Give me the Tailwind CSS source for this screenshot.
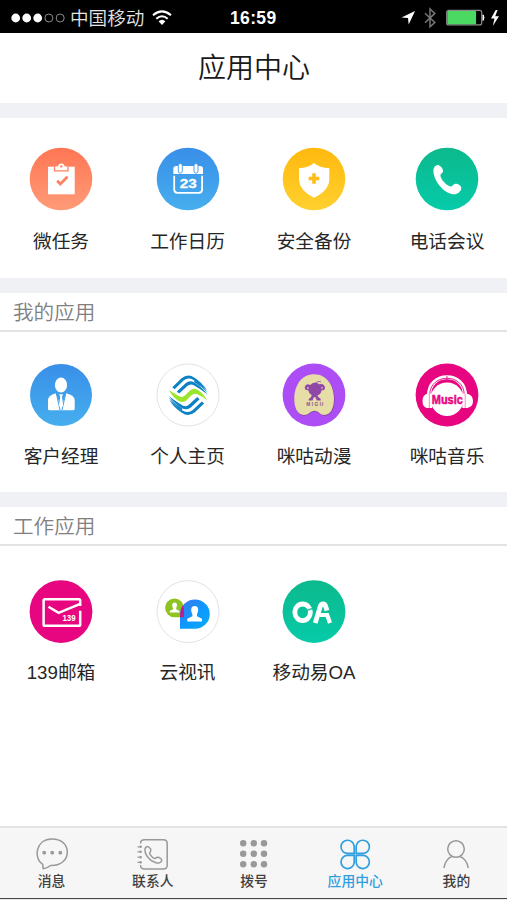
<!DOCTYPE html>
<html lang="zh-CN">
<head>
<meta charset="utf-8">
<title>应用中心</title>
<script src="https://cdn.jsdelivr.net/npm/@tailwindcss/browser@4"></script>
</head>
<body class="w-[507px] h-[900px] overflow-hidden bg-white font-['Liberation_Sans','Noto_Sans_CJK_SC',sans-serif] text-[#262626]">
<svg class="absolute w-0 h-0" aria-hidden="true">
  <defs>
    <linearGradient id="orange" x2="0" y2="1"><stop stop-color="#ff7654"/><stop offset="1" stop-color="#ff9b78"/></linearGradient>
    <linearGradient id="blue" x2="0" y2="1"><stop stop-color="#398fe8"/><stop offset="1" stop-color="#46aeee"/></linearGradient>
    <linearGradient id="yellow" x2="0" y2="1"><stop stop-color="#ffb90f"/><stop offset="1" stop-color="#ffd02e"/></linearGradient>
    <linearGradient id="green" x2="0" y2="1"><stop stop-color="#0cb98c"/><stop offset="1" stop-color="#06cba9"/></linearGradient>
    <linearGradient id="bubble" x2="1" y2="1"><stop stop-color="#3f74ee"/><stop offset=".55" stop-color="#0b9bff"/><stop offset="1" stop-color="#12a8f5"/></linearGradient>
    <g id="waves" fill="#0c82c6">
      <path d="M16.3 24.2 25.5 15.3Q32 10.2 38.5 14.8Q46 19.5 51.2 27.6Q44 20.5 37.5 16.9Q32 13.7 27.3 17.8L18.6 26.2Z"/>
      <path d="M20.8 28.4 29.3 20.4Q33.5 16.8 38.3 19.4Q46 23.8 51.7 31.6Q44 25.5 37.8 22.2Q34.3 20.3 31.3 23L23.2 30.6Z"/>
      <path d="M38.5 17.3Q46.5 21.7 51.5 29.6Q45 23 38 19Z"/>
    </g>
  </defs>
</svg>
<div class="flex flex-col w-[507px] h-[900px]">
  <header class="h-[33px] shrink-0 bg-black text-white flex items-center justify-between pl-[11px] pr-[6px] relative">
    <div class="flex items-center h-[33px] pt-[2px]">
      <svg class="w-[54px] h-[12px]" viewBox="0 0 54 12"><g fill="#fff"><circle cx="4.7" cy="6" r="4.4"/><circle cx="15.7" cy="6" r="4.4"/><circle cx="26.7" cy="6" r="4.4"/></g><g fill="none" stroke="#8b8b8b"><circle cx="37.9" cy="6" r="4"/><circle cx="49.2" cy="6" r="4"/></g></svg>
      <span class="ml-[5px] mt-[2px] text-[18.6px] leading-[24px] text-[#e4e4e4] font-[350] whitespace-nowrap">中国移动</span>
      <svg class="ml-[8px] w-[20px] h-[16px]" viewBox="0 0 20 16" fill="none" stroke="#fff" stroke-width="2.1"><path d="M1 5.2Q10-2.6 19 5.2M4.3 8.7Q10 3.8 15.7 8.7"/><path d="M6.6 11.2Q10 8.1 13.4 11.2L10 14.9Z" fill="#fff" stroke="none"/></svg>
    </div>
    <span class="absolute left-[230px] top-[8px] text-[17.5px] leading-[21px] font-bold whitespace-nowrap tracking-[0.35px]">16:59</span>
    <svg class="w-[101px] h-[24px] mt-[2px]" viewBox="0 0 101 24">
      <path d="M15 5 1.5 11.5 8 12 8.7 18.5Z" fill="#fff"/>
      <path d="M25 7.2 34.8 16.5 30 20.8V3L34.8 7.4 25 16.7" fill="none" stroke="#777" stroke-width="1.5"/>
      <rect x="46.7" y="4.3" width="35" height="14.6" rx="2" fill="none" stroke="#8b8b8b" stroke-width="1.2"/>
      <rect x="47.3" y="4.9" width="28.8" height="13.4" rx="1" fill="#4bd964"/>
      <path d="M83 8.8Q85 11.6 83 14.5Z" fill="#fff" stroke="#fff"/>
      <path d="M95.7 4 91 12.5H94.5L92.8 20 99 10.2H95.2L97.6 4Z" fill="#fff"/>
    </svg>
  </header>
  <h1 class="h-[70px] shrink-0 text-center text-[28px] font-[350] leading-[72px] text-[#191919] pl-px">应用中心</h1>

  <section class="h-[175px] shrink-0 border-t-[15px] border-[#eff1f4] pt-[28.5px] pl-[19px] grid grid-cols-[126.5px_126.5px_133px_84px] content-start text-[18.7px] leading-[28px] text-center whitespace-nowrap">
    <div class="w-[84px] flex flex-col items-center"><svg class="w-[64px] h-[64px]" viewBox="0 0 64 64"><circle cx="32" cy="32" r="31.3" fill="url(#orange)"/><path d="M19 19.7H45.7V47.3H19Z" fill="#fff"/><path d="M25.5 19.7V23.8H39V19.7" fill="none" stroke="#ff8061" stroke-width="1.3"/><path d="M27 22.5V19.5H29Q29.4 16.6 32.3 16.6T35.6 19.5H37.5V22.5Z" fill="#fff"/><circle cx="32.3" cy="19.4" r="1.2" fill="#ff8061"/><path d="M28.2 33.8 31.3 37 38.5 29.8" fill="none" stroke="#ff8160" stroke-width="2.8"/></svg><span class="mt-[17px]">微任务</span></div>
    <div class="w-[84px] flex flex-col items-center"><svg class="w-[64px] h-[64px]" viewBox="0 0 64 64"><circle cx="32" cy="32" r="31.3" fill="url(#blue)"/><path d="M17.3 27V22Q17.3 19 20.3 19H44Q47 19 47 22V27Z" fill="#fff"/><path d="M18.2 28.7V42.6Q18.2 45.9 21.5 45.9H42.8Q46.1 45.9 46.1 42.6V28.7" fill="none" stroke="#fff" stroke-width="1.8"/><g fill="#fff" stroke="#4095e5" stroke-width=".9"><rect x="22.3" y="16.5" width="4" height="9.7" rx="2"/><rect x="38" y="16.5" width="4" height="9.7" rx="2"/></g><text x="32.2" y="40.6" text-anchor="middle" textLength="17" lengthAdjust="spacingAndGlyphs" font-family="Liberation Sans" font-weight="700" font-size="13.5" fill="#fff" stroke="#fff" stroke-width=".3">23</text></svg><span class="mt-[17px]">工作日历</span></div>
    <div class="w-[84px] flex flex-col items-center"><svg class="w-[64px] h-[64px]" viewBox="0 0 64 64"><circle cx="32" cy="32" r="31.3" fill="url(#yellow)"/><path d="M32 16Q37.5 21 47.3 21.3V33Q46.5 44 32 50.7Q17.8 44 17 33V21.3Q26.5 21 32 16Z" fill="#fff"/><path d="M32 26.2V36.8M26.7 31.5H37.3" stroke="#ffbd19" stroke-width="3.6"/></svg><span class="mt-[17px]">安全备份</span></div>
    <div class="w-[84px] flex flex-col items-center"><svg class="w-[64px] h-[64px]" viewBox="0 0 64 64"><circle cx="32" cy="32" r="31.3" fill="url(#green)"/><path d="M18.5 22Q19.3 18.8 22.3 18.1C25 17.6 28.5 22 28.1 24.4C27.8 26 25.7 26.2 25.4 28.2C25.5 32.3 31.5 38.6 35.8 39.5C37.4 39.5 37.9 37.4 39.8 36.9C42.3 36.4 46.6 38.7 46.3 41.2C46 44.6 42.5 47.4 38.4 47.2C28.5 46.5 17.3 32.5 18.5 22Z" fill="#fff"/></svg><span class="mt-[17px]">电话会议</span></div>
  </section>

  <section class="h-[214px] shrink-0 border-t-[15px] border-[#eff1f4]">
    <h2 class="h-[39px] border-b-2 border-[#e2e3e5] pl-[13px] text-[20.6px] leading-[40px] font-[350] text-[#808080]">我的应用</h2>
    <div class="pt-[31px] pl-[19px] grid grid-cols-[126.5px_126.5px_133px_84px] text-[18.7px] leading-[28px] text-center whitespace-nowrap">
      <div class="w-[84px] flex flex-col items-center"><svg class="w-[64px] h-[64px]" viewBox="0 0 64 64"><circle cx="32" cy="32" r="31" fill="url(#blue)"/><ellipse cx="32" cy="22" rx="6.1" ry="7.4" fill="#fff"/><path d="M27 30.2 32 45 37.2 30.2Q45.7 32.5 45.7 37V45.7Q45.7 47.2 44.2 47.2H20.5Q19 47.2 19 45.7V37Q19 32.5 27 30.2Z" fill="#fff"/><path d="M27.3 30.2 31 47M36.8 30.2 33 47" stroke="#429ee8" stroke-width="1"/><path d="M30.2 31.3H34L33 34 34.2 42.5 32 45.5 30 42.5 31.2 34Z" fill="#fff"/></svg><span class="mt-[16px]">客户经理</span></div>
      <div class="w-[84px] flex flex-col items-center"><svg class="w-[64px] h-[64px]" viewBox="0 0 64 64"><circle cx="32" cy="32" r="31" fill="#fff" stroke="#e3e3e3"/><use href="#waves"/><use href="#waves" transform="rotate(180 32.2 32.3)"/><path d="M13 27.2Q18.5 30.5 23.3 33.2Q26.5 35 29.2 32.3L34.2 27.3Q37.8 24.2 42 27Q47.5 30.6 51.2 37.2Q46.2 33.2 41.2 31.2Q38 29.8 35.2 32.4L30.2 37.4Q26.5 40.5 22.3 37.8Q16.7 34 13 27.2Z" fill="#9ce52d"/></svg><span class="mt-[16px]">个人主页</span></div>
      <div class="w-[84px] flex flex-col items-center"><svg class="w-[64px] h-[64px]" viewBox="0 0 64 64"><circle cx="32" cy="32" r="31.4" fill="#ac4df6"/><path d="M32.5 12C45 12 52.7 23 52.7 36C52.7 46 49 52.5 43 52.7C37.5 52.7 37 48.5 32.8 48.5S27.5 53 22 52.7C15.5 52.2 12.5 45 12.7 36C13 22 20.5 12 32.5 12Z" fill="#85449f"/><path d="M32.3 11.3C44.5 11.3 52 22.5 52 35.5C52 45.5 48.5 51.7 42.5 52C37.8 52 36.8 47.7 32.5 47.7S26.8 52.2 21.8 52C15.3 51.5 12.1 44.5 12.3 35.5C12.6 21.5 20 11.3 32.3 11.3Z" fill="#e7dda7"/><g fill="#9048a8"><path d="M28.2 22Q32.5 17.3 37.3 21.3Q42 19.7 43 24.5Q43.2 27.5 39.5 27.5Q39 31.5 35.3 32.4L37 34.7Q39 35 38.8 37.4H34.8L33.6 34.3H31.8L30.5 37.4H26.5Q26.6 35 28.6 34.7L29.8 32.3Q26.6 30.5 26.3 27.3Q22.4 27.5 22.8 24Q24 20 28.2 22Z"/></g><path d="M33.5 20.5Q35.5 17.5 39 18.8" fill="none" stroke="#9048a8" stroke-width=".8"/><circle cx="25.8" cy="25" r=".9" fill="#d9c0b1"/><circle cx="40" cy="24.8" r=".9" fill="#d9c0b1"/><text x="32.7" y="42.6" text-anchor="middle" textLength="17" font-family="Liberation Sans" font-weight="700" font-size="4.8" fill="#88568b">MIGU</text></svg><span class="mt-[16px]">咪咕动漫</span></div>
      <div class="w-[84px] flex flex-col items-center"><svg class="w-[64px] h-[64px]" viewBox="0 0 64 64"><circle cx="32" cy="32" r="31.4" fill="#e80580"/><circle cx="32" cy="36.2" r="16.7" fill="#fff"/><path d="M14.2 33C12.8 8 51.2 8 49.8 33" fill="none" stroke="#fff" stroke-width="4.2"/><path d="M14.8 31C15.5 10 48.5 10 49.2 31" fill="none" stroke="#e80580" stroke-width=".9"/><path d="M32 13V18" stroke="#e80580" stroke-width=".8"/><path d="M12 30.8H17V45H12Q7.5 44 7.5 38T12 30.8ZM47.3 30.8H52.3Q58 32.2 58 38T52.3 45H47.3Z" fill="#fff"/><path d="M14.3 31V45M50.2 31V45" stroke="#f58ac3" stroke-width="1"/><text x="32.3" y="40.8" text-anchor="middle" textLength="31" lengthAdjust="spacingAndGlyphs" font-family="Liberation Sans" font-weight="700" font-size="12.5" fill="#e80580" stroke="#e80580" stroke-width=".5">Music</text></svg><span class="mt-[16px]">咪咕音乐</span></div>
    </div>
  </section>

  <section class="flex-1 border-t-[15px] border-[#eff1f4]">
    <h2 class="h-[39px] border-b-2 border-[#e2e3e5] pl-[13px] text-[20.6px] leading-[39px] font-[350] text-[#808080]">工作应用</h2>
    <div class="pt-[33.5px] pl-[19px] grid grid-cols-[126.5px_126.5px_133px_84px] text-[18.7px] leading-[28px] text-center whitespace-nowrap">
      <div class="w-[84px] flex flex-col items-center"><svg class="w-[64px] h-[64px]" viewBox="0 0 64 64"><circle cx="32" cy="31.6" r="31.4" fill="#e80580"/><path d="M51.2 26V20.5Q51.2 19.2 49.8 19.2H16Q14.6 19.2 14.6 20.5V44.4Q14.6 45.8 16 45.8H49.8Q51.2 45.8 51.2 44.4V30.7" fill="none" stroke="#fff" stroke-width="2.5"/><path d="M19.5 26.7 29.6 32.8 51.2 23.8" fill="none" stroke="#fff" stroke-width="2.5"/><text x="40" y="41" text-anchor="middle" textLength="13.2" lengthAdjust="spacingAndGlyphs" font-family="Liberation Sans" font-weight="700" font-size="8.5" fill="#fff">139</text></svg><span class="mt-[15px]">139邮箱</span></div>
      <div class="w-[84px] flex flex-col items-center"><svg class="w-[64px] h-[64px]" viewBox="0 0 64 64"><circle cx="32" cy="31.6" r="31" fill="#fff" stroke="#e3e3e3"/><path d="M18.5 18.4A9.4 9.4 0 1 0 18.5 37.2H27.9V27.8A9.4 9.4 0 0 0 18.5 18.4Z" fill="#8fc31f"/><path d="M24 48.8V34.1A14.9 14.7 0 1 1 38.8 48.8Z" fill="url(#bubble)"/><path d="M24.2 34Q24.4 29 26.8 25.5Q28 27.5 27.9 31V37.2H24.2Z" fill="#c51a86"/><path d="M18.6 22.5C21.2 22.5 21.6 25.5 20.2 28V29.3L23.5 31V32.4H13.8V31L17 29.3V28C15.7 25.5 16 22.5 18.6 22.5ZM38.7 26C42.7 26 43 30.5 41 34.2V36.2L46 38.7V41.5H31.3V38.7L36.4 36.2V34.2C34.4 30.5 34.7 26 38.7 26Z" fill="#fff"/></svg><span class="mt-[15px]">云视讯</span></div>
      <div class="w-[84px] flex flex-col items-center"><svg class="w-[64px] h-[64px]" viewBox="0 0 64 64"><circle cx="32" cy="31.6" r="31.4" fill="url(#green)"/><ellipse cx="20.6" cy="32.3" rx="7.8" ry="8.3" fill="none" stroke="#fff" stroke-width="4.8"/><path d="M24.2 30.6 31.5 28.2" stroke="#0ac09a" stroke-width="1.3"/><path d="M33.2 43 38 27.5Q38.8 24 41 24T44 27.5L45 31" fill="none" stroke="#fff" stroke-width="4.8"/><path d="M37.5 35H45.2L48 43" fill="none" stroke="#fff" stroke-width="4.2"/><path d="M41 31.8 48 30.6" stroke="#0ac09a" stroke-width="1"/></svg><span class="mt-[15px]">移动易OA</span></div>
    </div>
  </section>

  <nav class="h-[73px] shrink-0 bg-[#f6f6f6] border-t-2 border-t-[#e3e3e3] border-b border-b-[#444] pl-[1px] grid grid-cols-5 text-center text-[13.8px] leading-[20px] font-medium text-[#404040] whitespace-nowrap">
    <div class="flex flex-col items-center pt-[9px]"><svg class="w-[34px] h-[34px]" viewBox="0 0 34 34"><path d="M7.7 27.4C-1.5 22 0 2 17 2C28 2 32.3 9 32.3 15.3C32.3 22 27 28.8 15.5 28.5Q12 31.5 8.2 31.7Z" fill="none" stroke="#999" stroke-width="1.5"/><g fill="#999"><circle cx="9.2" cy="15.7" r="1.9"/><circle cx="17.2" cy="15.7" r="1.9"/><circle cx="25.3" cy="15.7" r="1.9"/></g></svg><span class="mt-px">消息</span></div>
    <div class="flex flex-col items-center pt-[9px]"><svg class="w-[34px] h-[34px]" viewBox="0 0 34 34" fill="none" stroke="#999" stroke-width="1.5"><path d="M4.5 6.5Q4.5 2.7 8.5 2.7H27.5Q31.2 2.7 31.2 6.5V28Q31.2 32 27.5 32H8.5Q4.5 32 4.5 28M4.5 8.5V11M4.5 13.5V16M4.5 19V21.5M4.5 24V26.5"/><path d="M1.5 9.8H6M1.5 14.8H6M1.5 20.2H6M1.5 25.3H6" stroke-width="1.2"/><path d="M9 12C9.2 10.4 10.8 9.2 12 9.6C14 10.3 15.5 12.7 14.6 14.2C13.8 15.2 13.2 16 14 17.3C15.5 19.6 17.2 21.2 18.7 21.5C20.1 21.3 20.5 19.8 22.3 20.3C24.3 21 26.2 22.3 25.7 23.7C24.7 26 22.5 26.3 20 25.8C14 24.3 8.3 17.5 9 12Z" stroke-width="1.5"/></svg><span class="mt-px">联系人</span></div>
    <div class="flex flex-col items-center pt-[9px]"><svg class="w-[34px] h-[34px]" viewBox="0 0 34 34" fill="#999"><circle cx="6.2" cy="6.3" r="3.2"/><circle cx="16.8" cy="6.3" r="3.2"/><circle cx="27" cy="6.3" r="3.2"/><circle cx="6.2" cy="16.8" r="3.2"/><circle cx="16.8" cy="16.8" r="3.2"/><circle cx="27" cy="16.8" r="3.2"/><circle cx="6.2" cy="27.2" r="3.2"/><circle cx="16.8" cy="27.2" r="3.2"/><circle cx="27" cy="27.2" r="3.2"/></svg><span class="mt-px">拨号</span></div>
    <div class="flex flex-col items-center pt-[9px] text-[#2f9fe0]"><svg class="w-[34px] h-[34px]" viewBox="0 0 34 34" fill="none" stroke="#2f9fe0" stroke-width="1.7"><path d="M16.2 16.4H9A6.6 6.6 0 1 1 16.2 9.2ZM18.2 16.4V9.2A6.6 6.6 0 1 1 25.4 16.4ZM16.2 18.4V25.6A6.6 6.6 0 1 1 9 18.4ZM18.2 18.4H25.4A6.6 6.6 0 1 1 18.2 25.6Z"/></svg><span class="mt-px">应用中心</span></div>
    <div class="flex flex-col items-center pt-[9px]"><svg class="w-[34px] h-[34px]" viewBox="0 0 34 34" fill="none" stroke="#999" stroke-width="1.5"><circle cx="17" cy="12" r="8.3"/><path d="M5 31Q6.2 22.2 13 19.4M20.8 19.4Q27.9 22.2 29.2 31"/></svg><span class="mt-px">我的</span></div>
  </nav>
  <div class="h-px shrink-0 bg-[#e9e9e9]"></div>
</div>
</body>
</html>
